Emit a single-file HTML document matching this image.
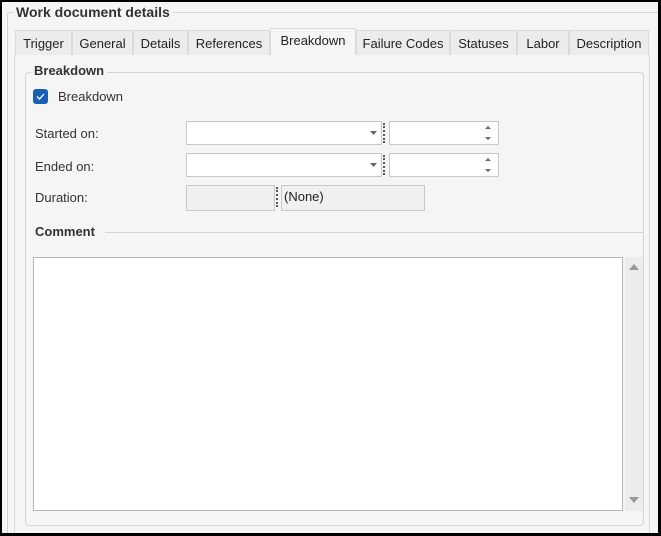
<!DOCTYPE html>
<html><head><style>
*{box-sizing:border-box;margin:0;padding:0}
body{width:661px;height:536px;background:#000;font-family:"Liberation Sans",sans-serif;font-size:13px;color:#222;position:relative;overflow:hidden}
.a{position:absolute}
#win{left:2px;top:2px;width:656px;height:531px;background:#f5f5f5;overflow:hidden}
.tab{position:absolute;top:30px;height:25px;background:#ececec;border:1px solid #dadada;border-bottom:none;padding:5px 0 0;text-align:center;color:#222}
.box{background:#fff;border:1px solid #c8c8c8}
.lbl{position:absolute;font-size:13px;color:#333}
.dots{position:absolute;width:2px;border-left:2px dotted #555}
</style></head><body>
<div id="win" class="a"></div>
<!-- outer group -->
<div class="a" style="left:7px;top:12px;width:651px;height:521px;border:1px solid #d4d4d4;border-right:none;border-bottom:none;border-radius:3px 0 0 0"></div>
<div class="a" style="left:13px;top:4px;padding:0 3px;background:#f5f5f5;font-weight:bold;font-size:14px;color:#333">Work document details</div>
<!-- panel -->
<div class="a" style="left:14px;top:54px;width:636px;height:479px;border:1px solid #dadada;border-bottom:none;background:#f5f5f5"></div>
<div class="tab" style="left:15px;width:57px">Trigger</div>
<div class="tab" style="left:72px;width:61px">General</div>
<div class="tab" style="left:133px;width:55px">Details</div>
<div class="tab" style="left:188px;width:82px">References</div>
<div class="tab" style="left:270px;top:28px;height:27px;width:86px;background:#f5f5f5;padding-top:4px">Breakdown</div>
<div class="tab" style="left:356px;width:94px">Failure Codes</div>
<div class="tab" style="left:450px;width:67px">Statuses</div>
<div class="tab" style="left:517px;width:52px">Labor</div>
<div class="tab" style="left:569px;width:80px">Description</div>
<!-- inner group -->
<div class="a" style="left:25px;top:72px;width:619px;height:454px;border:1px solid #d4d4d4;border-radius:4px"></div>
<div class="a" style="left:31px;top:63px;padding:0 3px;background:#f5f5f5;font-weight:bold;font-size:13px;color:#333">Breakdown</div>
<div class="a" style="left:33px;top:89px;width:15px;height:15px;background:#1a5fb4;border-radius:3px"></div>
<svg class="a" style="left:33px;top:89px" width="15" height="15"><path d="M4 7.5 L6.5 10 L11 5" stroke="#fff" stroke-width="1.3" fill="none"/></svg>
<div class="lbl" style="left:58px;top:89px">Breakdown</div>
<div class="lbl" style="left:35px;top:126px">Started on:</div>
<div class="lbl" style="left:35px;top:159px">Ended on:</div>
<div class="lbl" style="left:35px;top:190px">Duration:</div>
<div class="a box" style="left:186px;top:121px;width:196px;height:24px"></div>
<svg class="a" style="left:370px;top:131px" width="8" height="5"><path d="M0 0H7L3.5 4Z" fill="#666"/></svg>
<div class="dots" style="left:383px;top:123px;height:20px"></div>
<div class="a box" style="left:389px;top:121px;width:110px;height:24px"></div>
<svg class="a" style="left:484px;top:125px" width="8" height="16"><path d="M1 4H7L4 1Z M1 12H7L4 15Z" fill="#666"/></svg>
<div class="a box" style="left:186px;top:153px;width:196px;height:24px"></div>
<svg class="a" style="left:370px;top:163px" width="8" height="5"><path d="M0 0H7L3.5 4Z" fill="#666"/></svg>
<div class="dots" style="left:383px;top:155px;height:20px"></div>
<div class="a box" style="left:389px;top:153px;width:110px;height:24px"></div>
<svg class="a" style="left:484px;top:157px" width="8" height="16"><path d="M1 4H7L4 1Z M1 12H7L4 15Z" fill="#666"/></svg>
<div class="a" style="left:186px;top:185px;width:89px;height:26px;border:1px solid #c8c8c8;background:#f0f0f0"></div>
<div class="dots" style="left:276px;top:187px;height:20px"></div>
<div class="a" style="left:281px;top:185px;width:144px;height:26px;border:1px solid #c8c8c8;background:#f0f0f0;padding:3px 2px;color:#222">(None)</div>
<div class="a" style="left:105px;top:232px;width:538px;height:1px;background:#d4d4d4"></div>
<div class="a" style="left:35px;top:224px;font-weight:bold;color:#333">Comment</div>
<div class="a" style="left:33px;top:257px;width:590px;height:254px;background:#fff;border:1px solid #b8b8b8"></div>
<div class="a" style="left:625px;top:257px;width:18px;height:254px;background:#ececec"></div>
<svg class="a" style="left:628px;top:263px" width="12" height="8"><path d="M1 7H11L6 1Z" fill="#999"/></svg>
<svg class="a" style="left:628px;top:496px" width="12" height="8"><path d="M1 1H11L6 7Z" fill="#999"/></svg>
</body></html>
